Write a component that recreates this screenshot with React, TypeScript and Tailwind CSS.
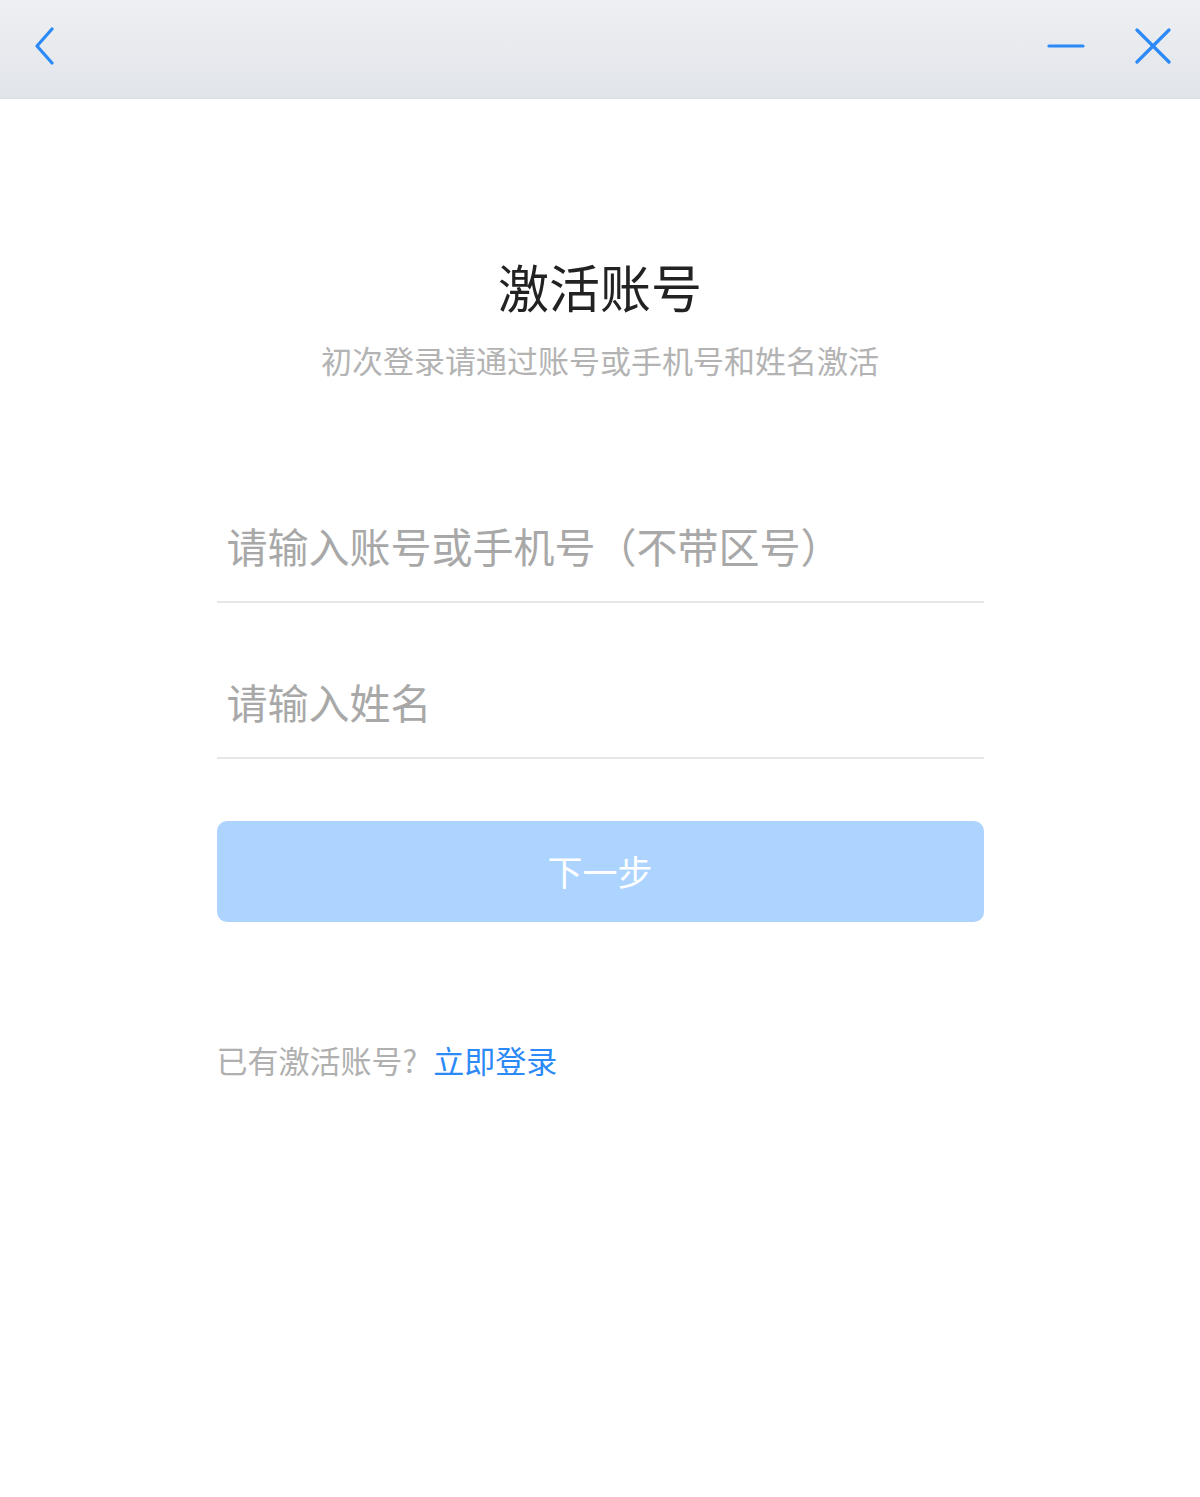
// Activate-account window: title bar with back / minimise / close,
// then a centred two-field form with a disabled "next" button.

const FONT = { fontFamily: '"Microsoft YaHei", "Noto Sans CJK SC", "Noto Sans", sans-serif' };

function TitleBar() {
  return (
    <div className="flex h-[99px] items-center justify-between border-b border-[#dcdfe4] bg-gradient-to-b from-[#eef0f3] to-[#e1e4e9] pb-[6px] pl-[28px] pr-[27px]">
      <button className="flex h-[44px] w-[36px] items-center justify-start">
        <svg width="30" height="38" viewBox="0 0 30 38" fill="none">
          <polyline
            points="24,2 9,19 24,36"
            stroke="#2b8af7"
            strokeWidth="3.2"
            strokeLinecap="round"
            strokeLinejoin="round"
          />
        </svg>
      </button>
      <div className="flex items-center gap-[47px]">
        <button className="flex h-[40px] w-[40px] items-center justify-center">
          <svg width="38" height="6" viewBox="0 0 38 6" fill="none">
            <line x1="2" y1="3" x2="36" y2="3" stroke="#2b8af7" strokeWidth="3.2" strokeLinecap="round" />
          </svg>
        </button>
        <button className="flex h-[40px] w-[40px] items-center justify-center">
          <svg width="36" height="36" viewBox="0 0 36 36" fill="none">
            <line x1="2" y1="2" x2="34" y2="34" stroke="#2b8af7" strokeWidth="3.2" strokeLinecap="round" />
            <line x1="34" y1="2" x2="2" y2="34" stroke="#2b8af7" strokeWidth="3.2" strokeLinecap="round" />
          </svg>
        </button>
      </div>
    </div>
  );
}

function Field({ placeholder }: { placeholder: string }) {
  return (
    <div className="h-[105px] border-b-2 border-[#e6e6e6] pl-[10px] pt-[22px]">
      <input
        className="h-[50px] w-full bg-transparent text-[41px] leading-[50px] text-[#333] outline-none placeholder:text-[#a8a8a8]"
        style={FONT}
        placeholder={placeholder}
      />
    </div>
  );
}

export default function App() {
  return (
    <div className="min-h-[1497px] w-[1200px] bg-white" style={FONT}>
      <TitleBar />
      <div className="flex flex-col items-center">
        <h1 className="mt-[157px] text-[51px] leading-[60px] text-[#222]">激活账号</h1>
        <p className="mt-[24px] text-[31px] leading-[40px] text-[#b3b3b3]">
          初次登录请通过账号或手机号和姓名激活
        </p>
      </div>
      <div className="mx-auto mt-[118px] w-[767px]">
        <Field placeholder="请输入账号或手机号（不带区号）" />
        <div className="mt-[51px]">
          <Field placeholder="请输入姓名" />
        </div>
        <button
          disabled
          className="mt-[62px] flex h-[101px] w-full items-center justify-center rounded-[10px] bg-[#add4ff] text-[35px] text-white"
          style={FONT}
        >
          下一步
        </button>
        <div className="mt-[118px] flex items-center text-[31px] leading-[40px]">
          <span className="text-[#b0b0b0]">已有激活账号?</span>
          <a className="ml-[16px] cursor-pointer text-[#2b8af7]">立即登录</a>
        </div>
      </div>
    </div>
  );
}
